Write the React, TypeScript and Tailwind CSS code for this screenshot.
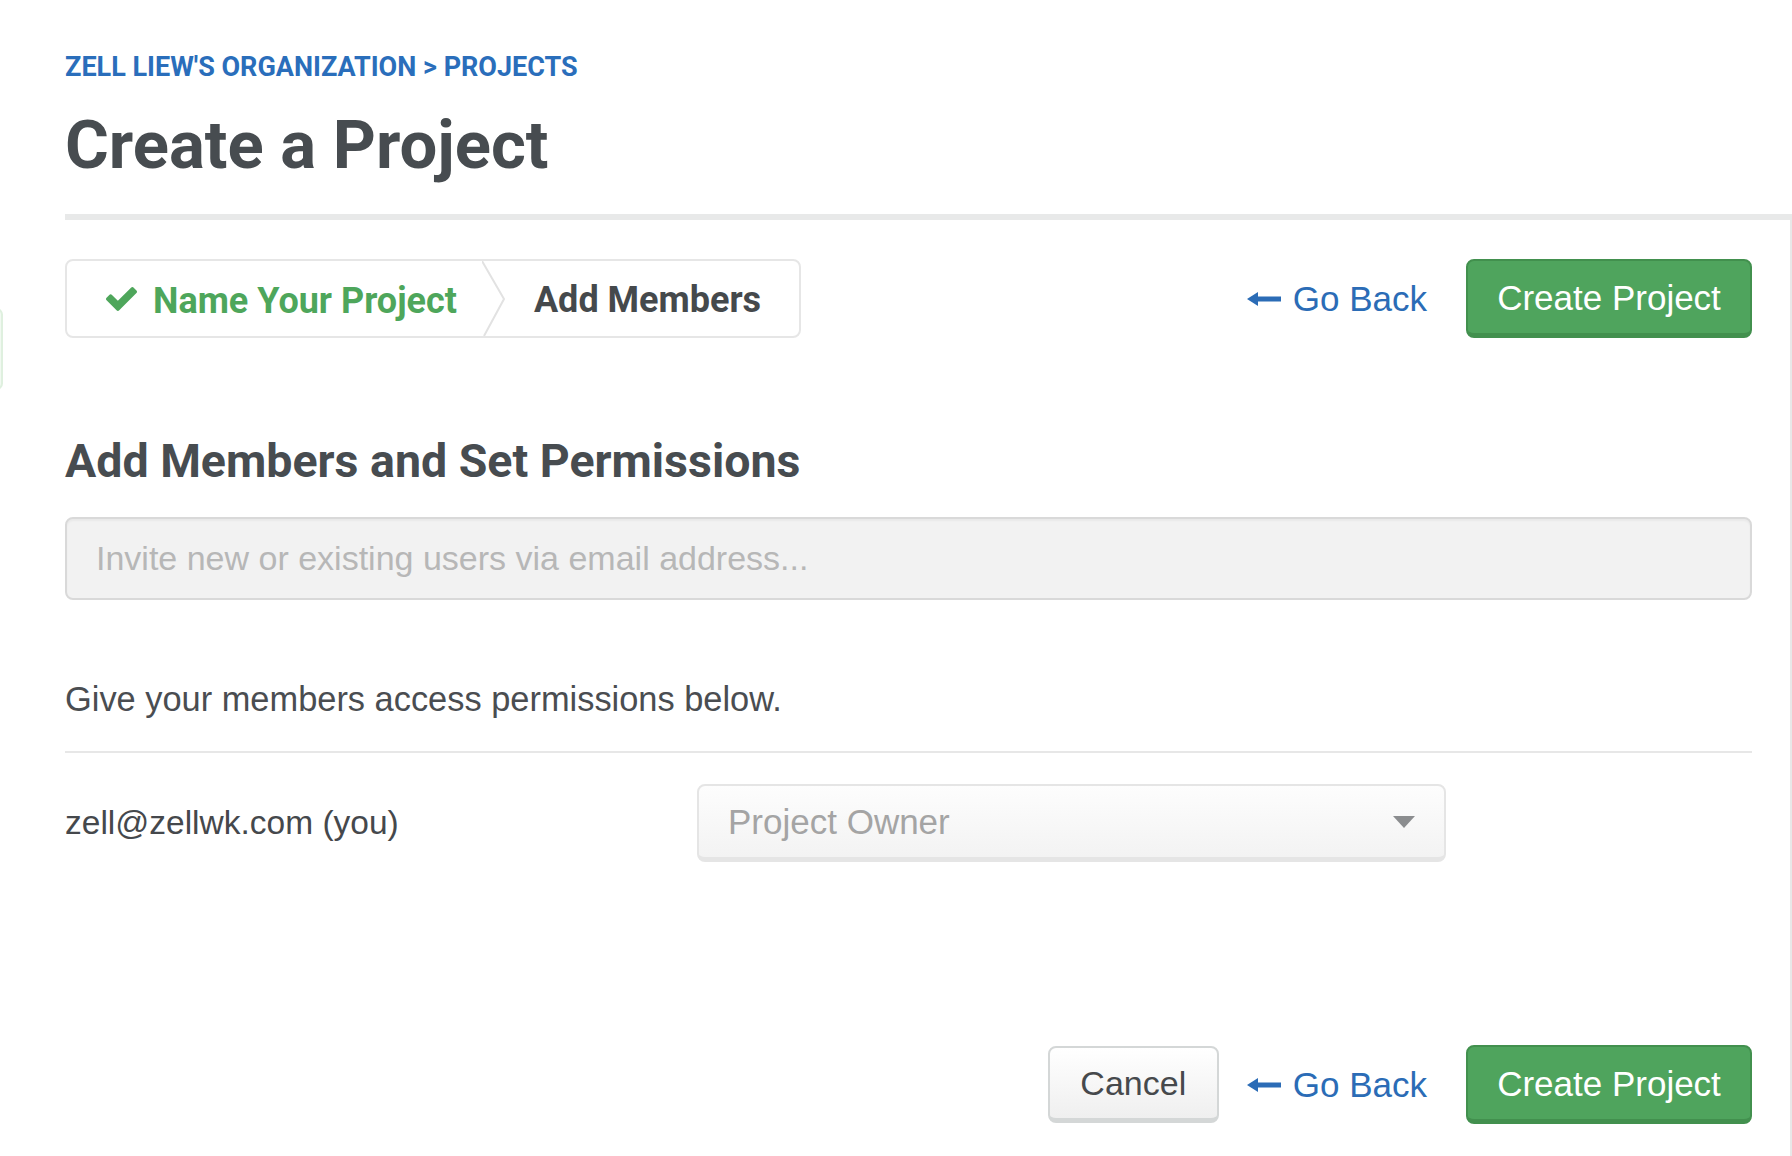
import React from "react";

const heading = { fontFamily: "Roboto, 'Liberation Sans', Arial, sans-serif" };

function CheckIcon() {
  return (
    <svg width="31" height="24" viewBox="121 334 1550 1188" className="shrink-0">
      <path
        fill="#4ea65b"
        d="M1671 566q0 40-28 68l-724 724-136 136q-28 28-68 28t-68-28l-136-136-362-362q-28-28-28-68t28-68l136-136q28-28 68-28t68 28l294 295 656-657q28-28 68-28t68 28l136 136q28 28 28 68z"
      />
    </svg>
  );
}

function BackArrow() {
  return (
    <svg width="34" height="16" viewBox="0 0 34 16" className="shrink-0">
      <polygon points="0,8 11,1 11,15" fill="#2b6cb6" />
      <rect x="10" y="5.5" width="24" height="5" fill="#2b6cb6" />
    </svg>
  );
}

function GoBack() {
  return (
    <a href="#" className="flex items-center gap-[12px] text-[35px] leading-none text-[#2b6cb6]">
      <BackArrow />
      <span>Go Back</span>
    </a>
  );
}

function CreateButton() {
  return (
    <button className="h-[79px] w-[286px] rounded-[8px] border-2 border-b-[5px] border-[#42904e] bg-[#4fa45d] text-[35px] leading-none text-white">
      Create Project
    </button>
  );
}

export default function App() {
  return (
    <div
      className="relative flex h-[1156px] w-full flex-col overflow-hidden bg-white"
      style={{ fontFamily: "'Liberation Sans', Arial, sans-serif" }}
    >
      <div className="absolute left-[-10px] top-[308px] h-[82px] w-[13px] rounded-[8px] border-2 border-[#dff0df] bg-[#f1f9f1]" />

      <div className="pl-[65px]">
        <div
          className="mt-[51px] text-[27px] font-bold uppercase leading-[32px] text-[#2a6ebb]"
          style={heading}
        >
          Zell Liew's Organization &gt; Projects
        </div>
        <h1
          className="mt-[22px] text-[67px] font-bold leading-[80px] text-[#474c50]"
          style={heading}
        >
          Create a Project
        </h1>
        <div className="mt-[29px] h-[6px] bg-[#e8e9e9]" />
      </div>

      <div className="flex flex-1 pl-[65px]">
        <div className="flex w-[1687px] flex-col">
          <div className="mt-[39px] flex items-center justify-between">
            <div className="flex h-[79px] w-[736px] items-stretch rounded-[8px] border-2 border-[#e6e6e6]">
              <div className="flex items-center gap-[16px] pl-[39px] pr-[25px]">
                <CheckIcon />
                <span className="pt-[4px] text-[36px] font-bold leading-none text-[#4ea65b]" style={heading}>
                  Name Your Project
                </span>
              </div>
              <svg width="24" height="75" viewBox="0 0 24 75" preserveAspectRatio="none" className="shrink-0">
                <polyline points="0,0 22,38 2,75" fill="none" stroke="#e2e2e2" strokeWidth="2" />
              </svg>
              <div className="flex items-center pl-[28px]">
                <span className="pt-[2px] text-[36px] font-bold leading-none text-[#45494c]" style={heading}>
                  Add Members
                </span>
              </div>
            </div>
            <div className="flex items-center gap-[39px]">
              <GoBack />
              <CreateButton />
            </div>
          </div>

          <h2
            className="mt-[95px] text-[46.5px] font-bold leading-[56px] text-[#474c50]"
            style={heading}
          >
            Add Members and Set Permissions
          </h2>

          <input
            type="text"
            placeholder="Invite new or existing users via email address..."
            className="mt-[28px] h-[83px] w-full rounded-[8px] border-2 border-[#d9d9d9] bg-[#f2f2f2] pl-[29px] text-[34px] text-[#555] shadow-[inset_0_2px_2px_rgba(0,0,0,0.04)] outline-none placeholder:text-[#b7b7b7]"
          />

          <p className="mt-[79px] text-[34.4px] leading-[40px] text-[#4a4d51]">
            Give your members access permissions below.
          </p>

          <div className="mt-[32px] h-[2px] bg-[#e7e7e7]" />

          <div className="mt-[31px] flex items-center">
            <div className="w-[632px] text-[33.5px] leading-none text-[#45484c]">zell@zellwk.com (you)</div>
            <div className="flex h-[78px] w-[749px] items-center justify-between rounded-[8px] border-2 border-b-[5px] border-[#e5e5e5] bg-gradient-to-b from-[#fdfdfd] to-[#f3f3f3] pl-[29px] pr-[29px]">
              <span className="text-[35px] leading-none text-[#a4a4a4]">Project Owner</span>
              <svg width="22" height="12" viewBox="0 0 22 12">
                <polygon points="0,0 22,0 11,12" fill="#8b8d8f" />
              </svg>
            </div>
          </div>

          <div className="mt-[183px] flex items-center justify-end">
            <button className="h-[77px] w-[171px] rounded-[8px] border-2 border-b-[5px] border-[#d4d7d7] bg-gradient-to-b from-[#ffffff] to-[#efefef] text-[34px] leading-none text-[#46494c]">
              Cancel
            </button>
            <div className="ml-[28px]">
              <GoBack />
            </div>
            <div className="ml-[39px]">
              <CreateButton />
            </div>
          </div>
        </div>
        <div className="flex-1 border-r-2 border-[#e8e8e8]" />
      </div>
    </div>
  );
}
